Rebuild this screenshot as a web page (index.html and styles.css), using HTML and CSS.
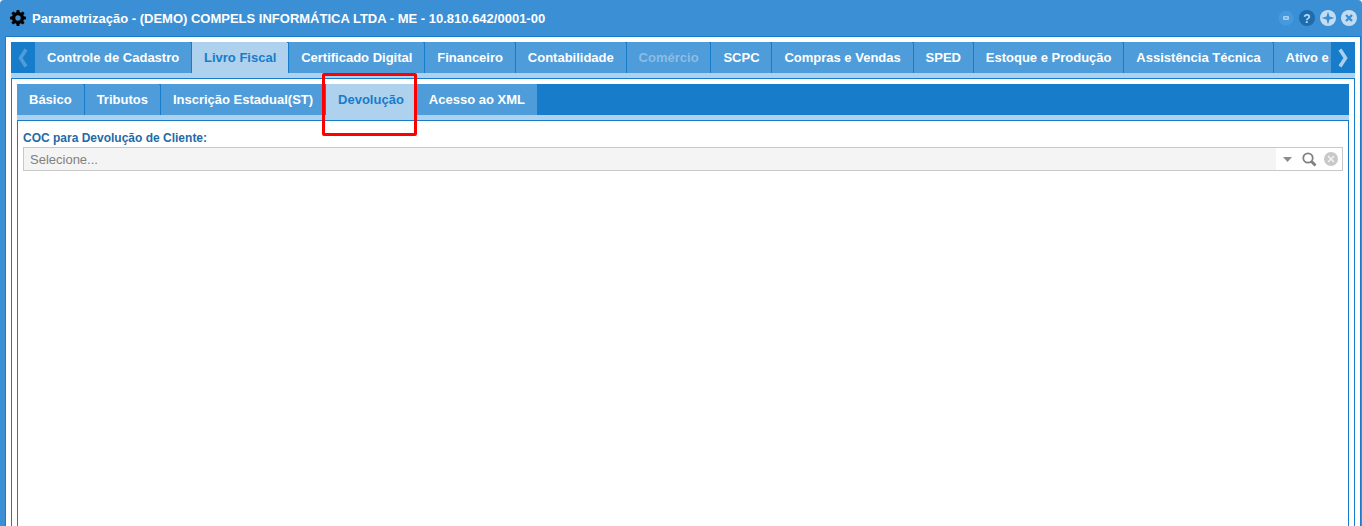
FILE: index.html
```html
<!DOCTYPE html>
<html lang="pt-BR">
<head>
<meta charset="utf-8">
<title>Parametrização</title>
<link rel="stylesheet" href="styles.css">
</head>
<body>
<div class="window">
  <header class="titlebar">
    <svg class="gear" viewBox="0 0 16 16" width="16" height="16"><path d="M6.700 0h2.600l.4 2.200 1.200.5 1.900-1.300 1.800 1.800-1.300 1.900.5 1.200 2.200.4v2.600l-2.200.4-.5 1.200 1.300 1.900-1.800 1.800-1.900-1.300-1.200.5-.4 2.200H6.700l-.4-2.200-1.200-.5-1.900 1.300-1.800-1.800 1.300-1.900-.5-1.200L0 9.300V6.700l2.200-.4.5-1.200-1.300-1.900 1.800-1.800 1.900 1.300 1.200-.5zM8 5.300a2.700 2.700 0 1 0 0 5.400 2.700 2.700 0 0 0 0-5.400z" fill="#000" fill-rule="evenodd"/></svg>
    <span class="title">Parametrização - (DEMO) COMPELS INFORMÁTICA LTDA - ME - 10.810.642/0001-00</span>
    <div class="controls">
      <svg viewBox="0 0 16 16" width="16" height="16"><circle cx="8" cy="8" r="7.500" fill="#4699dd"/><rect x="5" y="6" width="6" height="4" rx="1" fill="#a9cfee"/><rect x="6.500" y="7.500" width="3" height="1" fill="#4699dd"/></svg>
      <svg viewBox="0 0 16 16" width="16" height="16"><circle cx="8" cy="8" r="8" fill="#1c6cae"/><text x="8" y="12.500" class="qmark">?</text></svg>
      <svg viewBox="0 0 16 16" width="16" height="16"><circle cx="8" cy="8" r="8" fill="#c3dcf1"/><path d="M8 1.500 9.500 6.500 14.500 8 9.500 9.500 8 14.500 6.500 9.500 1.500 8 6.500 6.500z" fill="#3a8fd5"/></svg>
      <svg viewBox="0 0 16 16" width="16" height="16"><circle cx="8" cy="8" r="8" fill="#c3dcf1"/><path d="M5 5l6 6M11 5l-6 6" stroke="#3a8fd5" stroke-width="2.400"/></svg>
    </div>
  </header>
  <div class="content">
    <div class="panel outer">
      <nav class="tabbar">
        <div class="scroller"><svg viewBox="0 0 12 20" width="12" height="20"><path d="M9 1.500 3.500 10 9 18.500" fill="none" stroke="#4e9cd9" stroke-width="3.600"/></svg></div>
        <div class="tabs">
          <a class="tab">Controle de Cadastro</a>
          <a class="tab active">Livro Fiscal</a>
          <a class="tab">Certificado Digital</a>
          <a class="tab">Financeiro</a>
          <a class="tab">Contabilidade</a>
          <a class="tab disabled">Comércio</a>
          <a class="tab">SCPC</a>
          <a class="tab">Compras e Vendas</a>
          <a class="tab">SPED</a>
          <a class="tab">Estoque e Produção</a>
          <a class="tab">Assistência Técnica</a>
          <a class="tab last">Ativo e</a>
        </div>
        <div class="scroller"><svg viewBox="0 0 12 20" width="12" height="20"><path d="M3 1.500 8.500 10 3 18.500" fill="none" stroke="#a9cfee" stroke-width="3.600"/></svg></div>
      </nav>
      <div class="band"></div>
      <div class="panel-body outer-body">
        <nav class="tabbar inner">
          <a class="tab">Básico</a>
          <a class="tab">Tributos</a>
          <a class="tab">Inscrição Estadual(ST)</a>
          <a class="tab active">Devolução</a>
          <a class="tab last">Acesso ao XML</a>
          <span class="annotation"></span>
        </nav>
        <div class="band"></div>
        <div class="panel-body inner-body">
          <label class="field-label">COC para Devolução de Cliente:</label>
          <div class="combo">
            <span class="combo-text">Selecione...</span>
            <div class="combo-icons">
              <svg class="i-arrow" viewBox="0 0 9 5" width="9" height="5"><path d="M0 0h9L4.500 5z" fill="#8c8c8c"/></svg>
              <svg class="i-search" viewBox="0 0 15 15" width="15" height="15"><circle cx="6" cy="6" r="4.700" fill="none" stroke="#808080" stroke-width="1.800"/><path d="M9.500 9.500 13.500 13.500" stroke="#808080" stroke-width="2.800"/></svg>
              <svg class="i-clear" viewBox="0 0 14 14" width="14" height="14"><circle cx="7" cy="7" r="7" fill="#c8c8c8"/><path d="M4 4l6 6M10 4l-6 6" stroke="#f4f4f4" stroke-width="1.500"/></svg>
            </div>
          </div>
        </div>
      </div>
    </div>
  </div>
</div>
</body>
</html>
```
FILE: styles.css
```css
* { box-sizing: border-box; }
html, body { margin: 0; height: 100%; overflow: hidden; background: #fff; }
body { font-family: "Liberation Sans", Arial, sans-serif; }
.window {
  height: 526px;
  background: #3a8fd5;
  border-radius: 4px 4px 0 0;
  padding: 0 1px 0 5px;
  display: flex;
  flex-direction: column;
}
.titlebar {
  height: 36px;
  display: flex;
  align-items: center;
  padding-left: 5px;
  flex: none;
}
.gear { flex: none; }
.title { margin-left: 6px; color: #fff; font-size: 13px; font-weight: bold; white-space: nowrap; }
.controls { margin-left: auto; display: flex; gap: 5px; padding-right: 4px; }
.qmark { font: bold 12px "Liberation Sans", sans-serif; fill: #c3dcf1; text-anchor: middle; }
.content {
  flex: 1;
  background: #fff;
  border: 1px solid #177cca;
  border-bottom: 0;
  padding: 5px 5px 0;
  min-height: 0;
}
.panel { height: 100%; display: flex; flex-direction: column; }
.tabbar { display: flex; height: 31px; flex: none; background: #177cca; position: relative; }
.tabs { flex: 1; display: flex; overflow: hidden; min-width: 0; background: #4e9cd9; }
.scroller { width: 24px; flex: none; display: flex; align-items: center; justify-content: center; }
.tab {
  flex: none;
  position: relative;
  height: 31px;
  line-height: 31px;
  padding: 0 12px;
  color: #fff;
  background: #4e9cd9;
  font-size: 13px;
  font-weight: bold;
  border-right: 1px solid #177cca;
  white-space: nowrap;
}
.tabs .tab { padding-right: 11.85px; }
.tab::after {
  content: "";
  position: absolute;
  top: 0;
  right: -2px;
  width: 3px;
  height: 1px;
  background: #177cca;
}
.tab.last { border-right: 0; }
.tab.last::after { display: none; }
.tab.active { background: #aed1ee; color: #177cca; }
.tab.disabled { color: #8dbde5; }
.band { height: 5px; background: #aed1ee; flex: none; }
.panel-body { flex: 1; background: #fff; border: 1px solid #177cca; border-bottom: 0; min-height: 0; }
.outer-body { padding: 5px 5px 0; display: flex; flex-direction: column; }
.inner-body { padding: 10px 5px 0; }
.annotation {
  position: absolute;
  left: 305px;
  top: -11px;
  width: 95px;
  height: 63px;
  border: 3px solid #f00;
  border-radius: 2px;
}
.field-label { display: block; color: #1f6aa8; font-size: 12px; font-weight: bold; line-height: 15px; height: 16px; }
.combo {
  height: 24px;
  border: 1px solid #c8c8c8;
  display: flex;
  background: #f4f4f4;
}
.combo-text { flex: 1; color: #808080; font-size: 13px; line-height: 23px; padding-left: 6px; }
.combo-icons { width: 66px; background: #fff; display: flex; align-items: center; padding-left: 7px; }
.i-search { margin-left: 10px; }
.i-clear { margin-left: 7px; }
```
